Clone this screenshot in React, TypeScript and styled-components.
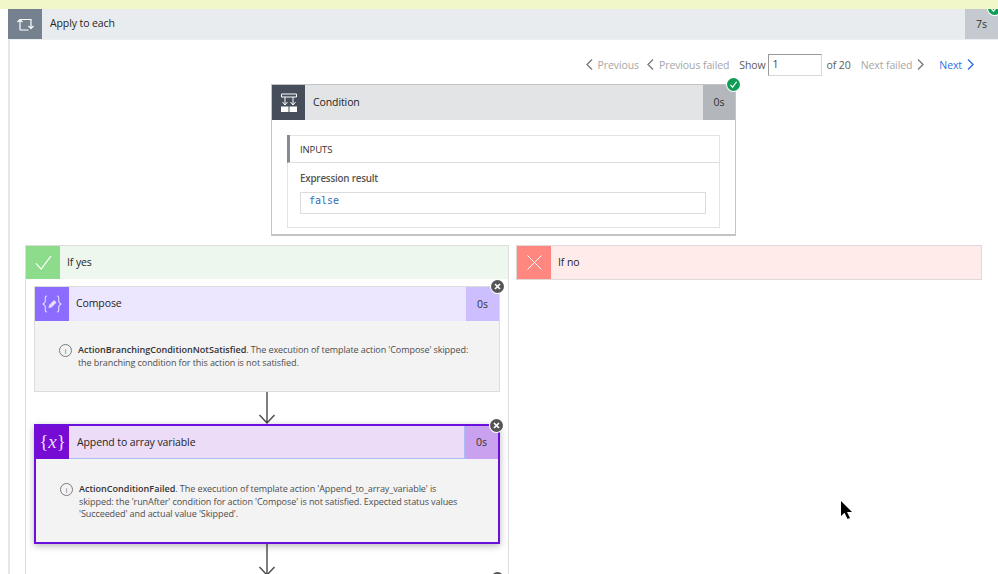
import React from 'react';
import styled, { createGlobalStyle } from 'styled-components';

const GlobalStyle = createGlobalStyle`
  html, body {
    margin: 0;
    padding: 0;
    background: #ffffff;
  }
  body {
    font-family: "Open Sans", "Noto Sans", sans-serif;
    font-size: 10.5px;
    letter-spacing: -0.1px;
    color: #323130;
  }
`;

const Page = styled.div`
  position: relative;
  width: 998px;
  height: 574px;
  overflow: hidden;
  background: #fff;
`;

const TopStrip = styled.div`
  position: relative;
  z-index: 3;
  height: 9px;
  background: #f1f7c9;
`;

const Loop = styled.div`
  margin-left: 8px;
  border-left: 2px solid #e6e6e6;
  height: 565px;
`;

const Header = styled.div<{ $bg: string; $h: number }>`
  position: relative;
  display: flex;
  align-items: stretch;
  height: ${({ $h }) => $h}px;
  background: ${({ $bg }) => $bg};
`;

const IconTile = styled.div<{ $bg: string; $w: number }>`
  flex: none;
  display: flex;
  align-items: center;
  justify-content: center;
  width: ${({ $w }) => $w}px;
  background: ${({ $bg }) => $bg};
`;

const Title = styled.div<{ $pad?: number; $lift?: number }>`
  flex: 1;
  display: flex;
  align-items: center;
  padding-left: ${({ $pad }) => $pad ?? 8}px;
  padding-bottom: ${({ $lift }) => $lift ?? 2}px;
  color: #252423;
`;

const Duration = styled.div<{ $bg: string; $w: number }>`
  flex: none;
  display: flex;
  align-items: center;
  justify-content: center;
  width: ${({ $w }) => $w}px;
  padding-bottom: 1px;
  background: ${({ $bg }) => $bg};
  color: #323130;
`;

const LoopHeader = styled(Header)`
  margin-left: -2px;
  border-bottom: 1px solid #eceef0;
  box-sizing: border-box;
`;

const Pager = styled.div`
  box-sizing: border-box;
  display: flex;
  align-items: center;
  justify-content: flex-end;
  height: 44px;
  padding: 5px 24px 0 0;
`;

const PagerLink = styled.span<{ $active?: boolean; $gap: number }>`
  display: inline-flex;
  align-items: center;
  gap: 5px;
  margin-left: ${({ $gap }) => $gap}px;
  color: ${({ $active }) => ($active ? '#2f6fe8' : '#a6a6a6')};
`;

const PagerText = styled.span<{ $gap: number }>`
  margin-left: ${({ $gap }) => $gap}px;
  color: #5c5c5c;
`;

const PageInput = styled.div`
  box-sizing: border-box;
  width: 54px;
  height: 22px;
  margin-left: 2px;
  padding-left: 4px;
  line-height: 19px;
  border: 1px solid #d8d8d8;
  border-top: 1px solid #9a9a9a;
  border-left: 1px solid #9a9a9a;
  color: #444;
`;

const ConditionCard = styled.div`
  position: relative;
  box-sizing: border-box;
  width: 465px;
  height: 152px;
  margin-left: 261px;
  border: 1px solid #c4c4c4;
  border-bottom-width: 2px;
`;

const CardBody = styled.div`
  padding: 15px;
`;

const InputsBox = styled.div`
  box-sizing: border-box;
  height: 93px;
  border: 1px solid #e3e3e3;
`;

const InputsHead = styled.div`
  box-sizing: border-box;
  display: flex;
  align-items: center;
  height: 28px;
  padding: 1px 0 0 10px;
  border-left: 3px solid #868b92;
  border-bottom: 1px solid #dedede;
  margin-left: -1px;
  margin-top: -1px;
  font-size: 9.5px;
  color: #333;
`;

const InputsBody = styled.div`
  padding: 8px 13px 0 12px;
`;

const FieldLabel = styled.div`
  font-size: 9.8px;
  font-weight: 600;
  letter-spacing: -0.2px;
  line-height: 15px;
  color: #555;
`;

const FieldValue = styled.div`
  box-sizing: border-box;
  height: 22px;
  margin-top: 6px;
  padding-left: 8px;
  border: 1px solid #dcdcdc;
  font-family: "DejaVu Sans Mono", "Liberation Mono", monospace;
  font-size: 10px;
  letter-spacing: 0;
  line-height: 16px;
  color: #2f6db5;
`;

const Branches = styled.div`
  display: flex;
  gap: 7px;
  margin-top: 9px;
  padding-left: 15px;
`;

const YesBranch = styled.div`
  box-sizing: border-box;
  width: 484px;
  height: 340px;
  border: 1px solid #dddddd;
  border-bottom: none;
`;

const NoBranch = styled.div`
  box-sizing: border-box;
  width: 466px;
  height: 35px;
  border: 1px solid #e2d8d8;
`;

const BranchBody = styled.div`
  padding: 7px 8px 0;
`;

const ActionCard = styled.div<{ $border: string; $bw: number; $h: number; $shadow?: boolean }>`
  position: relative;
  box-sizing: border-box;
  width: 466px;
  height: ${({ $h }) => $h}px;
  border: ${({ $bw, $border }) => `${$bw}px solid ${$border}`};
  background: #f3f3f3;
  box-shadow: ${({ $shadow }) => ($shadow ? '0 2px 7px rgba(0,0,0,0.28)' : 'none')};
`;

const FocusTitle = styled(Title)`
  border: 1px solid #a9bdf6;
  border-top: none;
  border-left: none;
`;

const Message = styled.div<{ $top: number }>`
  display: flex;
  gap: 6px;
  padding: ${({ $top }) => $top}px 10px 0 24px;
`;

const InfoMark = styled.div`
  flex: none;
  width: 11px;
  height: 11px;
  border: 1px solid #7b7b7b;
  border-radius: 50%;
  font-size: 8px;
  line-height: 11px;
  text-align: center;
  color: #7b7b7b;
`;

const MessageText = styled.div`
  font-size: 9.05px;
  line-height: 12.5px;
  color: #4e4e4e;
  b {
    font-weight: 600;
    letter-spacing: 0;
    color: #333;
  }
`;

const Connector = styled.div<{ $h: number }>`
  display: flex;
  justify-content: center;
  width: 466px;
  height: ${({ $h }) => $h}px;
`;

const Badge = styled.div<{ $bg: string; $top: number; $right: number }>`
  position: absolute;
  z-index: 2;
  top: ${({ $top }) => $top}px;
  right: ${({ $right }) => $right}px;
  display: flex;
  align-items: center;
  justify-content: center;
  width: 13px;
  height: 13px;
  border-radius: 50%;
  background: ${({ $bg }) => $bg};
  box-shadow: 0 0 0 1px #fff;
`;

const VariableGlyph = styled.div`
  font-family: "Liberation Serif", serif;
  font-size: 19px;
  font-weight: 400;
  letter-spacing: 0;
  line-height: 24px;
  padding-bottom: 2px;
  color: #eadcf8;
`;

const Cursor = styled.svg`
  position: absolute;
  left: 841px;
  top: 501px;
`;

const LoopIcon = () => (
  <svg width="18" height="14" viewBox="0 0 18 14" fill="none" stroke="#fff" strokeWidth="1.2">
    <path d="M4 13V2.500h11v9M1.500 5 4 2.500 6.500 5M4 13h8.500" />
    <path d="M12.500 9 15 11.500 17.500 9" />
  </svg>
);

const ConditionIcon = () => (
  <svg width="18" height="20" viewBox="0 0 18 20" fill="none" stroke="#fff" strokeWidth="1">
    <path d="M1.500 1h15v3h-15zM5 4v7M13 4v7" />
    <path d="M2.500 9 5 12 7.500 9M10.500 9 13 12 15.500 9" />
    <path d="M1 13.500h7.500V19H1zM9.500 13.500H17V19H9.500z" fill="#fff" stroke="none" />
  </svg>
);

const ComposeIcon = () => (
  <svg width="20" height="18" viewBox="0 0 20 18" fill="none" stroke="#e3dcff" strokeWidth="1.100">
    <path d="M5 1C2.500 1 3.500 4 3.200 6.500 3 8 2 8.500 1 9c1 .5 2 1 2.200 2.500C3.500 14 2.500 17 5 17" />
    <path d="M15 1c2.500 0 1.500 3 1.800 5.500.2 1.500 1.200 2 2.200 2.500-1 .5-2 1-2.200 2.500C16.500 14 17.500 17 15 17" />
    <path d="m6.500 13 .6-3 5-5 2.400 2.400-5 5z" fill="#e3dcff" stroke="none" />
  </svg>
);

const CheckIcon = ({ size, stroke, width }: { size: number; stroke: string; width: number }) => (
  <svg width={size} height={size} viewBox="0 0 18 18" fill="none" stroke={stroke} strokeWidth={width}>
    <path d="M1 10l5.500 6L17 2" />
  </svg>
);

const CrossIcon = () => (
  <svg width="15" height="15" viewBox="0 0 15 15" fill="none" stroke="#fff" strokeWidth="1">
    <path d="M.5.500l14 14M14.500.5l-14 14" />
  </svg>
);

const SmallCross = () => (
  <svg width="7" height="7" viewBox="0 0 7 7" fill="none" stroke="#fff" strokeWidth="1.700">
    <path d="M1 1l5 5M6 1L1 6" />
  </svg>
);

const Chevron = ({ left, color }: { left?: boolean; color: string }) => (
  <svg width="7" height="11" viewBox="0 0 7 11" fill="none" stroke={color} strokeWidth="1.400">
    <path d={left ? 'M6 .5l-5 5 5 5' : 'M1 .5l5 5-5 5'} />
  </svg>
);

const Arrow = ({ h }: { h: number }) => (
  <svg width="18" height={h} viewBox={`0 0 18 ${h}`} fill="none" stroke="#4a4a4a" strokeWidth="1.400">
    <path d={`M9 0v${h - 1}M1.500 ${h - 9}L9 ${h - 1}l7.500-8`} />
  </svg>
);

const App: React.FC = () => (
  <Page>
    <GlobalStyle />
    <TopStrip />
    <Loop>
      <LoopHeader $bg="#e9ecef" $h={31}>
        <IconTile $bg="#75818f" $w={34}>
          <LoopIcon />
        </IconTile>
        <Title>Apply to each</Title>
        <Duration $bg="#c5cad0" $w={33}>7s</Duration>
        <Badge $bg="#0f9d58" $top={-7} $right={-3}>
          <CheckIcon size={7} stroke="#fff" width={3} />
        </Badge>
      </LoopHeader>
      <Pager>
        <PagerLink $gap={0}>
          <Chevron left color="#7d7d7d" />
          Previous
        </PagerLink>
        <PagerLink $gap={8}>
          <Chevron left color="#7d7d7d" />
          Previous failed
        </PagerLink>
        <PagerText $gap={10}>Show</PagerText>
        <PageInput>1</PageInput>
        <PagerText $gap={5}>of 20</PagerText>
        <PagerLink $gap={10}>
          Next failed
          <Chevron color="#7d7d7d" />
        </PagerLink>
        <PagerLink $gap={15} $active>
          Next
          <Chevron color="#2f6fe8" />
        </PagerLink>
      </Pager>
      <ConditionCard>
        <Header $bg="#e3e4e6" $h={35}>
          <IconTile $bg="#454e5a" $w={33}>
            <ConditionIcon />
          </IconTile>
          <Title>Condition</Title>
          <Duration $bg="#b3b7bb" $w={32}>0s</Duration>
        </Header>
        <Badge $bg="#0f9d58" $top={-7} $right={-5}>
          <CheckIcon size={7} stroke="#fff" width={3} />
        </Badge>
        <CardBody>
          <InputsBox>
            <InputsHead>INPUTS</InputsHead>
            <InputsBody>
              <FieldLabel>Expression result</FieldLabel>
              <FieldValue>false</FieldValue>
            </InputsBody>
          </InputsBox>
        </CardBody>
      </ConditionCard>
      <Branches>
        <YesBranch>
          <Header $bg="#edf7ee" $h={33}>
            <IconTile $bg="#8cdc8c" $w={34}>
              <CheckIcon size={17} stroke="#fff" width={1.2} />
            </IconTile>
            <Title $pad={7}>If yes</Title>
          </Header>
          <BranchBody>
            <ActionCard $border="#dcdcdc" $bw={1} $h={106}>
              <Header $bg="#ece6ff" $h={34}>
                <IconTile $bg="#8c6cff" $w={34}>
                  <ComposeIcon />
                </IconTile>
                <Title $pad={7}>Compose</Title>
                <Duration $bg="#cdbfff" $w={33}>0s</Duration>
              </Header>
              <Badge $bg="#555" $top={-7} $right={-5}>
                <SmallCross />
              </Badge>
              <Message $top={23}>
                <InfoMark>i</InfoMark>
                <MessageText>
                  <b>ActionBranchingConditionNotSatisfied</b>. The execution of template action 'Compose' skipped:
                  <br />
                  the branching condition for this action is not satisfied.
                </MessageText>
              </Message>
            </ActionCard>
            <Connector $h={32}>
              <Arrow h={32} />
            </Connector>
            <ActionCard $border="#6a0fdc" $bw={2} $h={120} $shadow>
              <Header $bg="#ecdcf8" $h={33}>
                <IconTile $bg="#760bd4" $w={33}>
                  <VariableGlyph>
                    {'{'}
                    <i>x</i>
                    {'}'}
                  </VariableGlyph>
                </IconTile>
                <FocusTitle $lift={0}>Append to array variable</FocusTitle>
                <Duration $bg="#caa1ee" $w={33}>0s</Duration>
              </Header>
              <Badge $bg="#555" $top={-7} $right={-5}>
                <SmallCross />
              </Badge>
              <Message $top={24}>
                <InfoMark>i</InfoMark>
                <MessageText>
                  <b>ActionConditionFailed</b>. The execution of template action 'Append_to_array_variable' is
                  <br />
                  skipped: the 'runAfter' condition for action 'Compose' is not satisfied. Expected status values
                  <br />
                  'Succeeded' and actual value 'Skipped'.
                </MessageText>
              </Message>
            </ActionCard>
            <Connector $h={32}>
              <Arrow h={32} />
            </Connector>
            <ActionCard $border="#dcdcdc" $bw={1} $h={40}>
              <Badge $bg="#555" $top={-5} $right={-5}>
                <SmallCross />
              </Badge>
            </ActionCard>
          </BranchBody>
        </YesBranch>
        <NoBranch>
          <Header $bg="#ffecea" $h={33}>
            <IconTile $bg="#ff8780" $w={34}>
              <CrossIcon />
            </IconTile>
            <Title $pad={7}>If no</Title>
          </Header>
        </NoBranch>
      </Branches>
    </Loop>
    <Cursor width="12" height="19" viewBox="0 0 12 19">
      <path d="M0 0v15l3.500-3.300L6.500 18l2.500-1-3-6h5z" fill="#000" />
    </Cursor>
  </Page>
);

export default App;
